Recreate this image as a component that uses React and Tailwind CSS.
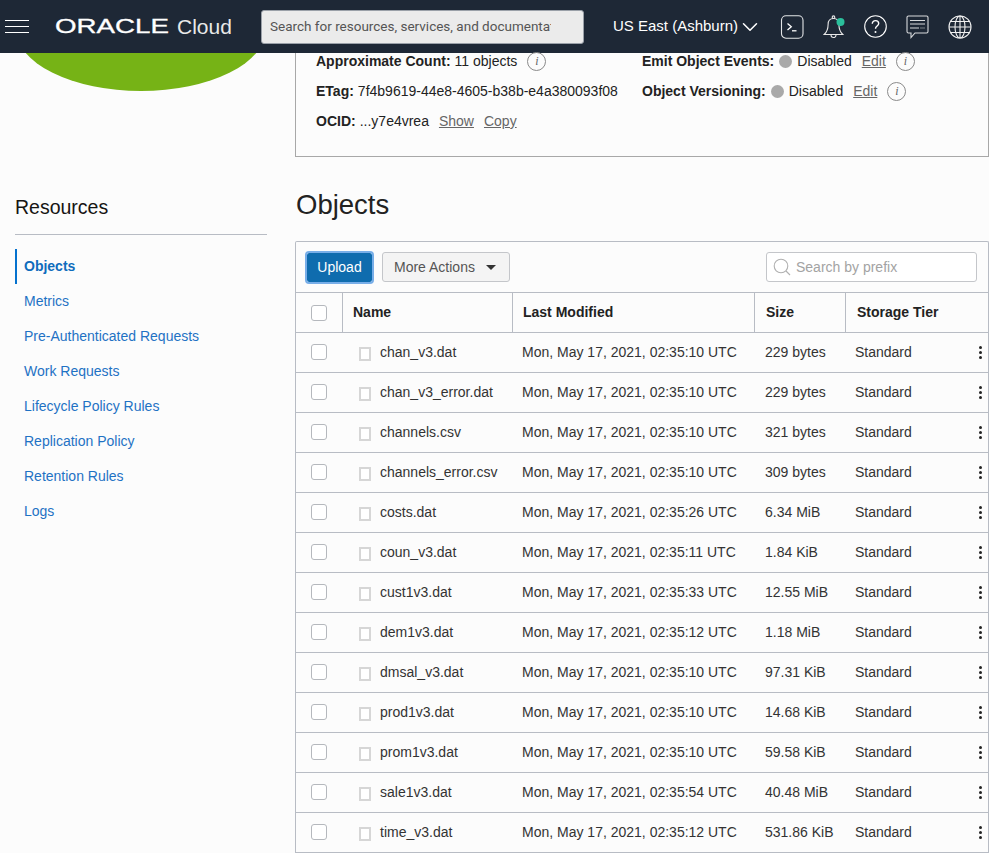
import { ChevronDown } from 'lucide-react';

const navItems = [
  'Objects',
  'Metrics',
  'Pre-Authenticated Requests',
  'Work Requests',
  'Lifecycle Policy Rules',
  'Replication Policy',
  'Retention Rules',
  'Logs',
];

const rows = [
  ['chan_v3.dat', 'Mon, May 17, 2021, 02:35:10 UTC', '229 bytes'],
  ['chan_v3_error.dat', 'Mon, May 17, 2021, 02:35:10 UTC', '229 bytes'],
  ['channels.csv', 'Mon, May 17, 2021, 02:35:10 UTC', '321 bytes'],
  ['channels_error.csv', 'Mon, May 17, 2021, 02:35:10 UTC', '309 bytes'],
  ['costs.dat', 'Mon, May 17, 2021, 02:35:26 UTC', '6.34 MiB'],
  ['coun_v3.dat', 'Mon, May 17, 2021, 02:35:11 UTC', '1.84 KiB'],
  ['cust1v3.dat', 'Mon, May 17, 2021, 02:35:33 UTC', '12.55 MiB'],
  ['dem1v3.dat', 'Mon, May 17, 2021, 02:35:12 UTC', '1.18 MiB'],
  ['dmsal_v3.dat', 'Mon, May 17, 2021, 02:35:10 UTC', '97.31 KiB'],
  ['prod1v3.dat', 'Mon, May 17, 2021, 02:35:10 UTC', '14.68 KiB'],
  ['prom1v3.dat', 'Mon, May 17, 2021, 02:35:10 UTC', '59.58 KiB'],
  ['sale1v3.dat', 'Mon, May 17, 2021, 02:35:54 UTC', '40.48 MiB'],
  ['time_v3.dat', 'Mon, May 17, 2021, 02:35:12 UTC', '531.86 KiB'],
];

const InfoIcon = () => (
  <span className="ml-[10px] flex h-[19px] w-[19px] shrink-0 items-center justify-center rounded-full border border-[#8a8a8a] font-['Liberation_Serif',serif] text-[12px] italic leading-none text-[#666]">
    i
  </span>
);

const Checkbox = () => (
  <span className="block h-4 w-4 rounded-[3px] border border-[#b5b8bd] bg-white" />
);

const HeaderIcons = () => (
  <div className="ml-[17px] flex items-center gap-[19px] text-white">
    <svg width="24" height="24" viewBox="0 0 24 24" fill="none" stroke="#e4e6e8" strokeWidth="1.100">
      <rect x="1.500" y="0.800" width="21.500" height="22.400" rx="4.500" />
      <path d="M7.500 8.500l3.800 3.300-3.800 3.300" strokeWidth="1.300" stroke="#fff" />
      <path d="M12 15.800h4.500" strokeWidth="1.300" stroke="#fff" />
    </svg>
    <svg width="22" height="24" viewBox="0 0 22 24" fill="none" stroke="#e8e8e8" strokeWidth="1.100">
      <path d="M10.500 3.500c-3.400 0-5.400 2.600-5.400 6 0 4.800-1.200 7.500-3.900 10h18.600c-2.700-2.500-3.900-5.200-3.900-10 0-3.400-2-6-5.400-6z" />
      <circle cx="10.500" cy="2.200" r="1.300" />
      <path d="M8 20a2.500 2.500 0 005 0" />
      <circle cx="17.500" cy="7" r="4" fill="#2bbf9c" stroke="none" />
    </svg>
    <svg width="23" height="23" viewBox="0 0 23 23" fill="none" stroke="#fff" strokeWidth="1.100">
      <circle cx="11.500" cy="11.500" r="10.800" />
      <path d="M8.300 8.800c0-1.900 1.400-3.200 3.200-3.200s3.200 1.200 3.200 2.900c0 2.500-3.200 2.600-3.200 5.200" strokeWidth="1.400" />
      <circle cx="11.500" cy="17" r="1" fill="#fff" stroke="none" />
    </svg>
    <svg width="23" height="24" viewBox="0 0 23 24" fill="none" stroke="#d8dadc" strokeWidth="1.100">
      <path d="M2.500 1h18a1.500 1.500 0 011.500 1.500v14a1.500 1.500 0 01-1.500 1.500H9l-4 4.500V18H2.500A1.500 1.500 0 011 16.500v-14A1.500 1.500 0 012.500 1z" />
      <path d="M4 5.500h15M4 9h15M4 13h9" />
      <path d="M14.500 13h4.500" strokeDasharray="1 1" />
    </svg>
    <svg width="24" height="24" viewBox="0 0 24 24" fill="none" stroke="#f0f0f0" strokeWidth="1.100">
      <circle cx="12" cy="12" r="11" />
      <ellipse cx="12" cy="12" rx="5" ry="11" />
      <path d="M12 1v22M1 12h22M2.500 6.500h19M2.500 17.500h19" />
    </svg>
  </div>
);

export default function App() {
  return (
    <div className="h-[853px] overflow-hidden bg-[#fcfcfc] font-['Liberation_Sans',Arial,sans-serif] text-[14px] text-[#161513]">
      <header className="flex h-[53px] items-center bg-[#1e2836] text-white">
        <div className="ml-[5px] flex w-[24px] shrink-0 flex-col gap-[5px]">
          <span className="h-px bg-white" />
          <span className="h-px bg-white" />
          <span className="h-px bg-white" />
        </div>
        <div className="ml-[26px] flex w-[206px] shrink-0 items-center">
          <span className="block w-[122px] origin-left scale-x-[1.42] text-[19.500px] leading-none [-webkit-text-stroke:0.3px_white]">ORACLE</span>
          <span className="text-[21px] leading-none text-[#e8e8e8]">Cloud</span>
        </div>
        <div className="flex h-[34px] w-[323px] shrink-0 items-center rounded-[3px] border border-[#9aa0a8] bg-[#ebebeb] pl-2 pr-[32px] font-['Roboto',sans-serif] text-[13.500px] text-[#555]">
          <span className="overflow-hidden whitespace-nowrap">Search for resources, services, and documentation</span>
        </div>
        <div className="ml-[29px] flex shrink-0 items-center whitespace-nowrap text-[15px]">
          US East (Ashburn)
          <ChevronDown className="-ml-px h-[26px] w-[26px]" strokeWidth={1.400} />
        </div>
        <HeaderIcons />
      </header>

      <main className="flex">
        <aside className="w-[295px] shrink-0">
          <div className="h-[38px] overflow-hidden">
            <svg width="295" height="38" viewBox="0 0 295 38">
              <ellipse cx="141" cy="-24" rx="125" ry="62" fill="#76b316" />
            </svg>
          </div>
          <div className="pl-[15px] pr-[28px]">
            <h2 className="mt-[105px] border-b border-[#b8bcc4] pb-[15px] text-[19.500px] leading-[23px]">Resources</h2>
            <nav className="mt-[14px]">
              {navItems.map((item, i) => (
                <a
                  key={item}
                  className={`flex h-[35px] items-center pl-[7px] ${
                    i === 0
                      ? 'border-l-2 border-[#0572ce] font-bold text-[#0f6cbd]'
                      : 'border-l-2 border-transparent text-[#1f72c4]'
                  }`}
                >
                  {item}
                </a>
              ))}
            </nav>
          </div>
        </aside>

        <section className="min-w-0 flex-1">
          <div className="flex gap-0 border-x border-b border-[#a8a8a8] pb-[27px] pl-[20px] text-[#222]">
            <div className="flex w-[326px] shrink-0 flex-col gap-[14px]">
              <div className="flex h-4 items-center whitespace-nowrap">
                <b>Approximate Count:</b>
                <span className="ml-[4px]">11 objects</span>
                <InfoIcon />
              </div>
              <div className="flex h-4 items-center whitespace-nowrap">
                <b>ETag:</b>
                <span className="ml-[4px]">7f4b9619-44e8-4605-b38b-e4a380093f08</span>
              </div>
              <div className="flex h-4 items-center whitespace-nowrap">
                <b>OCID:</b>
                <span className="ml-[4px]">...y7e4vrea</span>
                <a className="ml-[10px] text-[#666] underline">Show</a>
                <a className="ml-[10px] text-[#666] underline">Copy</a>
              </div>
            </div>
            <div className="flex flex-col gap-[14px]">
              <div className="flex h-4 items-center whitespace-nowrap">
                <b>Emit Object Events:</b>
                <span className="ml-[5px] h-[13px] w-[13px] rounded-full bg-[#a9a9a9]" />
                <span className="ml-[5px]">Disabled</span>
                <a className="ml-[10px] text-[#666] underline">Edit</a>
                <InfoIcon />
              </div>
              <div className="flex h-4 items-center whitespace-nowrap">
                <b>Object Versioning:</b>
                <span className="ml-[5px] h-[13px] w-[13px] rounded-full bg-[#a9a9a9]" />
                <span className="ml-[5px]">Disabled</span>
                <a className="ml-[10px] text-[#666] underline">Edit</a>
                <InfoIcon />
              </div>
            </div>
          </div>

          <h1 className="mt-[31px] pl-px text-[27.500px] leading-[34px] text-[#222]">Objects</h1>

          <div className="mt-[19px] rounded-t-[2px] border-l border-r border-t border-[#b8bcc4]">
            <div className="flex h-[51px] items-center border-b border-[#b8bcc4] pl-[11px] pr-[11px]">
              <button className="flex h-[29px] w-[65px] items-center justify-center rounded-[2px] bg-[#0f6cae] text-white outline-[2px] outline-offset-0 outline-[#78aee8] [outline-style:solid]">
                Upload
              </button>
              <button className="ml-[10px] flex h-[30px] w-[128px] items-center rounded-[3px] border border-[#c4c6ca] bg-[#f4f4f4] pl-[11px] text-[#555]">
                More Actions
                <span className="ml-[11px] h-0 w-0 border-x-[5px] border-t-[5px] border-x-transparent border-t-[#333]" />
              </button>
              <div className="ml-auto flex h-[30px] w-[211px] items-center rounded-[3px] border border-[#c4c6ca] bg-white pl-[6px] text-[#a3a3a3]">
                <svg width="18" height="18" viewBox="0 0 18 18" fill="none" stroke="#b0b0b0" strokeWidth="1.100">
                  <circle cx="8" cy="8" r="6.800" />
                  <path d="M13 13l4 4" />
                </svg>
                <span className="ml-[5px]">Search by prefix</span>
              </div>
            </div>

            <div className="grid h-[40px] grid-cols-[47px_170px_242px_91px_1fr] items-stretch border-b border-[#b8bcc4] font-bold text-[#222]">
              <div className="flex items-center border-r border-[#b8bcc4] pl-[15px]"><Checkbox /></div>
              <div className="flex items-center border-r border-[#b8bcc4] pl-[10px]">Name</div>
              <div className="flex items-center border-r border-[#b8bcc4] pl-[10px]">Last Modified</div>
              <div className="flex items-center border-r border-[#b8bcc4] pl-[11px]">Size</div>
              <div className="flex items-center pl-[11px]">Storage Tier</div>
            </div>

            {rows.map(([name, modified, size]) => (
              <div
                key={name}
                className="grid h-[40px] grid-cols-[47px_170px_242px_91px_1fr] items-center border-b border-[#b8bcc4] text-[#333]"
              >
                <div className="pb-px pl-[15px]"><Checkbox /></div>
                <div className="flex items-center pl-[16px]">
                  <span className="mt-[2px] h-[14px] w-[12px] border-2 border-[#d6d6d6] bg-white" />
                  <span className="ml-[9px]">{name}</span>
                </div>
                <div className="pl-[9px] whitespace-nowrap">{modified}</div>
                <div className="pl-[10px]">{size}</div>
                <div className="flex items-center justify-between pl-[9px] pr-[6px]">
                  <span>Standard</span>
                  <span className="flex flex-col gap-[2px]">
                    <span className="h-[3px] w-[3px] rounded-full bg-[#222]" />
                    <span className="h-[3px] w-[3px] rounded-full bg-[#222]" />
                    <span className="h-[3px] w-[3px] rounded-full bg-[#222]" />
                  </span>
                </div>
              </div>
            ))}
          </div>
        </section>
      </main>
    </div>
  );
}
